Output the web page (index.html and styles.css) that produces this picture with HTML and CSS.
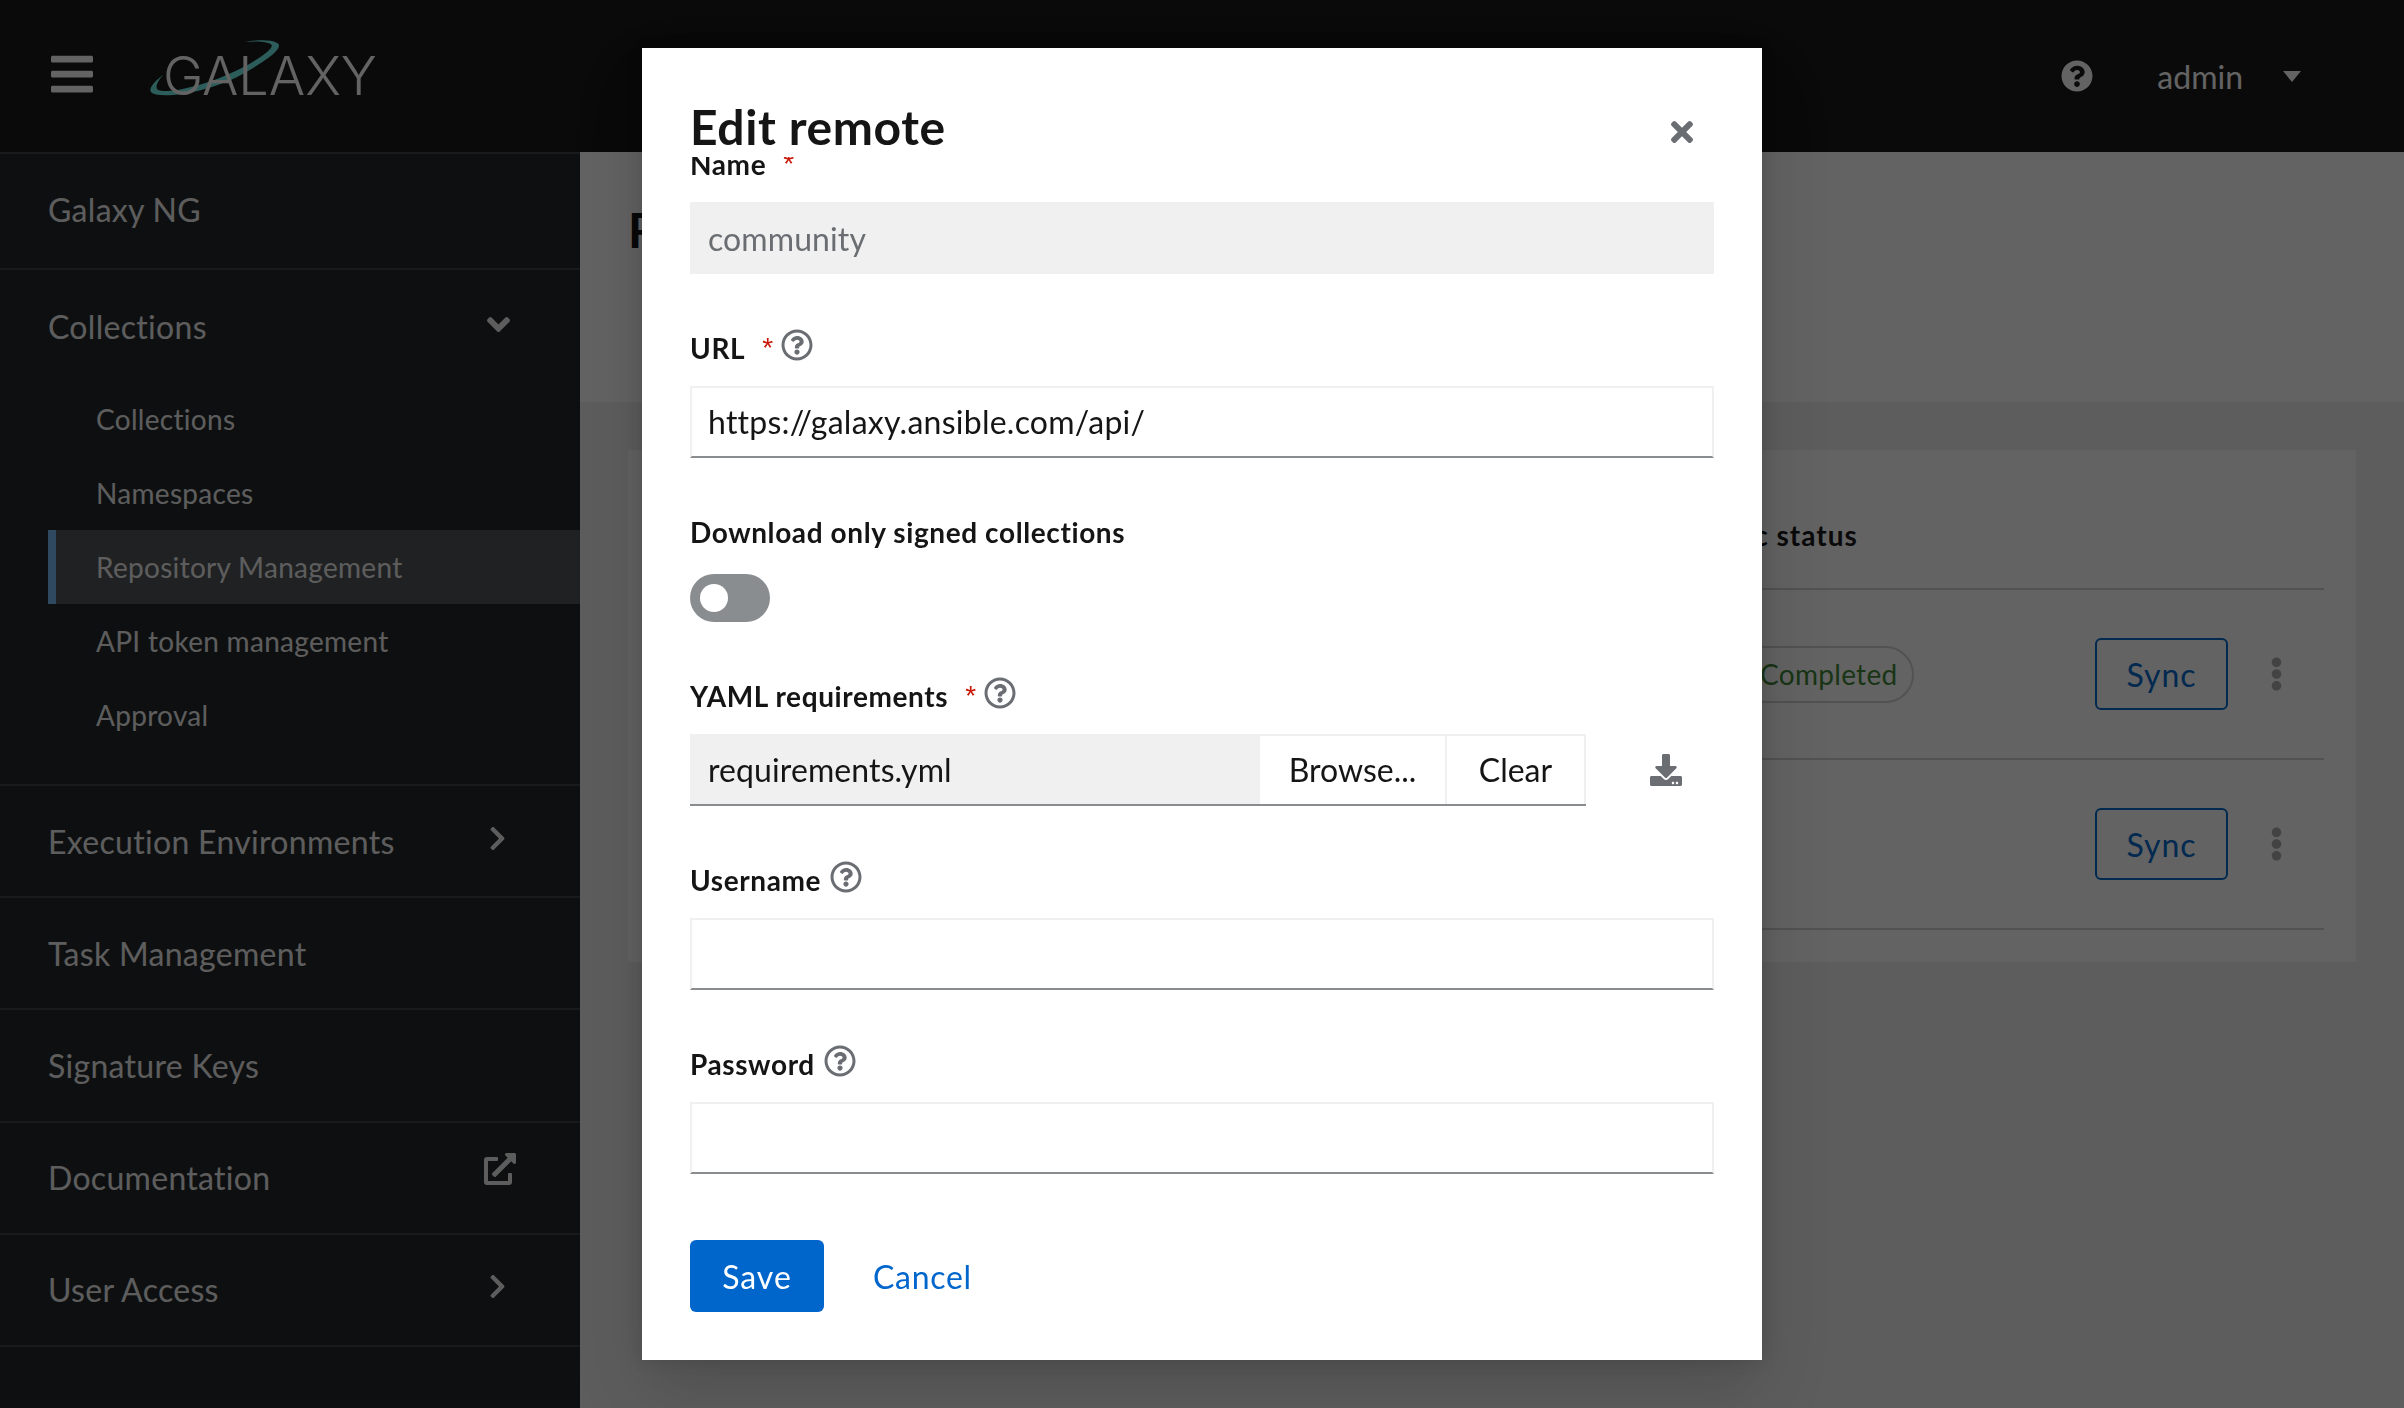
FILE: index.html
```html
<!DOCTYPE html>
<html lang="en">
<head>
<meta charset="UTF-8">
<title>Galaxy - Repo Management</title>
<link rel="stylesheet" href="styles.css">
</head>
<body>
<svg class="defs" width="0" height="0">
  <symbol id="i-bars" viewBox="0 0 448 512"><path d="M16 132h416c8.837 0 16-7.163 16-16V76c0-8.837-7.163-16-16-16H16C7.163 60 0 67.163 0 76v40c0 8.837 7.163 16 16 16zm0 160h416c8.837 0 16-7.163 16-16v-40c0-8.837-7.163-16-16-16H16c-8.837 0-16 7.163-16 16v40c0 8.837 7.163 16 16 16zm0 160h416c8.837 0 16-7.163 16-16v-40c0-8.837-7.163-16-16-16H16c-8.837 0-16 7.163-16 16v40c0 8.837 7.163 16 16 16z"/></symbol>
  <symbol id="i-help-solid" viewBox="0 0 512 512"><path d="M504 256c0 136.997-111.043 248-248 248S8 392.997 8 256C8 119.083 119.043 8 256 8s248 111.083 248 248zM262.655 90c-54.497 0-89.255 22.957-116.549 63.758-3.536 5.286-2.353 12.415 2.715 16.258l34.699 26.31c5.205 3.947 12.621 3.008 16.665-2.122 17.864-22.658 30.113-35.797 57.303-35.797 20.429 0 45.698 13.148 45.698 32.958 0 14.976-12.363 22.667-32.534 33.976C247.128 238.528 216 254.941 216 296v4c0 6.627 5.373 12 12 12h56c6.627 0 12-5.373 12-12v-1.333c0-28.462 83.186-29.647 83.186-106.667 0-58.002-60.165-102-116.531-102zM256 338c-25.365 0-46 20.635-46 46 0 25.364 20.635 46 46 46s46-20.636 46-46c0-25.365-20.635-46-46-46z"/></symbol>
  <symbol id="i-help" viewBox="0 0 512 512"><path d="M256 8C119.043 8 8 119.083 8 256c0 136.997 111.043 248 248 248s248-111.003 248-248C504 119.083 392.957 8 256 8zm0 448c-110.532 0-200-89.431-200-200 0-110.495 89.472-200 200-200 110.491 0 200 89.471 200 200 0 110.53-89.431 200-200 200zm107.244-255.2c0 67.052-72.421 68.084-72.421 92.863V300c0 6.627-5.373 12-12 12h-45.647c-6.627 0-12-5.373-12-12v-8.659c0-35.745 27.1-50.034 47.579-61.516 17.561-9.845 28.324-16.541 28.324-29.579 0-17.246-21.999-28.693-39.784-28.693-23.189 0-33.894 10.977-48.942 29.969-4.057 5.12-11.46 6.071-16.666 2.124l-27.824-21.098c-5.107-3.872-6.251-11.066-2.644-16.363C184.846 131.491 214.94 112 261.794 112c49.071 0 101.45 38.304 101.45 88.8zM298 368c0 23.159-18.841 42-42 42s-42-18.841-42-42 18.841-42 42-42 42 18.841 42 42z"/></symbol>
  <symbol id="i-down" viewBox="0 0 320 512"><path d="M143 352.3L7 216.3c-9.4-9.4-9.4-24.6 0-33.9l22.6-22.6c9.4-9.4 24.6-9.4 33.9 0l96.4 96.4 96.4-96.4c9.4-9.4 24.6-9.4 33.9 0l22.6 22.6c9.4 9.4 9.4 24.6 0 33.9l-136 136c-9.2 9.4-24.4 9.4-33.8 0z"/></symbol>
  <symbol id="i-right" viewBox="0 0 320 512"><path d="M285.476 272.971L91.132 467.314c-9.373 9.373-24.569 9.373-33.941 0l-22.667-22.667c-9.357-9.357-9.375-24.522-.04-33.901L188.505 256 34.484 101.255c-9.335-9.379-9.317-24.544.04-33.901l22.667-22.667c9.373-9.373 24.569-9.373 33.941 0L285.475 239.03c9.373 9.372 9.373 24.568.001 33.941z"/></symbol>
  <symbol id="i-ext" viewBox="0 0 512 512"><path d="M432 320h-32a16 16 0 0 0-16 16v112H64V128h144a16 16 0 0 0 16-16V80a16 16 0 0 0-16-16H48a48 48 0 0 0-48 48v352a48 48 0 0 0 48 48h352a48 48 0 0 0 48-48V336a16 16 0 0 0-16-16zM488 0H360c-21.37 0-32.05 25.91-17 41l35.73 35.73L135 320.37a24 24 0 0 0 0 34L157.67 377a24 24 0 0 0 34 0l243.61-243.68L471 169c15 15 41 4.5 41-17V24a24 24 0 0 0-24-24z"/></symbol>
  <symbol id="i-kebab" viewBox="0 0 192 512"><path d="M96 184c39.8 0 72 32.2 72 72s-32.2 72-72 72-72-32.2-72-72 32.2-72 72-72zM24 80c0 39.8 32.2 72 72 72s72-32.2 72-72S135.8 8 96 8 24 40.2 24 80zm0 352c0 39.8 32.2 72 72 72s72-32.2 72-72-32.2-72-72-72-72 32.2-72 72z"/></symbol>
  <symbol id="i-close" viewBox="0 0 352 512"><path d="M242.72 256l100.07-100.07c12.28-12.28 12.28-32.19 0-44.48l-22.24-22.24c-12.28-12.28-32.19-12.28-44.48 0L176 189.28 75.93 89.21c-12.28-12.28-32.19-12.28-44.48 0L9.21 111.45c-12.28 12.28-12.28 32.19 0 44.48L109.28 256 9.21 356.07c-12.28 12.28-12.28 32.19 0 44.48l22.24 22.24c12.28 12.28 32.2 12.28 44.48 0L176 322.72l100.07 100.07c12.28 12.28 32.2 12.28 44.48 0l22.24-22.24c12.28-12.28 12.28-32.19 0-44.48L242.72 256z"/></symbol>
</svg>

<div class="page">
  <header class="topbar">
    <svg class="burger"><use href="#i-bars"/></svg>
    <div class="logo">
      <svg class="logo-ring" viewBox="0 0 780 300"><path d="M100 165C70 185 52 210 66 219C100 238 250 215 350 155C420 115 465 80 440 68C420 58 380 60 345 66C380 62 420 65 425 75C432 90 360 135 290 165C210 200 110 222 85 210C72 202 85 180 100 165Z"/></svg>
      <span class="logo-text">GALAXY</span>
    </div>
    <div class="topbar-right">
      <svg class="top-help"><use href="#i-help-solid"/></svg>
      <span class="user">admin</span>
      <span class="caret"></span>
    </div>
  </header>

  <div class="below">
    <nav class="sidebar">
      <div class="nav-top">Galaxy NG</div>
      <div class="nav-group">
        <div class="nav-group-title">Collections <svg class="chev-down"><use href="#i-down"/></svg></div>
        <a class="nav-sub">Collections</a>
        <a class="nav-sub">Namespaces</a>
        <a class="nav-sub active">Repository Management</a>
        <a class="nav-sub">API token management</a>
        <a class="nav-sub">Approval</a>
      </div>
      <div class="nav-row">Execution Environments <svg class="chev-right"><use href="#i-right"/></svg></div>
      <div class="nav-row">Task Management</div>
      <div class="nav-row">Signature Keys</div>
      <div class="nav-row">Documentation <svg class="ext"><use href="#i-ext"/></svg></div>
      <div class="nav-row">User Access <svg class="chev-right"><use href="#i-right"/></svg></div>
    </nav>

    <main class="main">
      <section class="page-head"><h1>Repo Management</h1></section>
      <section class="content">
        <div class="card">
          <div class="tr th">
            <div>Remote name</div>
            <div>Sync status</div>
          </div>
          <div class="tr">
            <div>community</div>
            <div><span class="label">Completed</span></div>
            <button class="sync">Sync</button>
            <svg class="kebab"><use href="#i-kebab"/></svg>
          </div>
          <div class="tr">
            <div>rh-certified</div>
            <div></div>
            <button class="sync">Sync</button>
            <svg class="kebab"><use href="#i-kebab"/></svg>
          </div>
        </div>
      </section>
    </main>
  </div>
</div>

<div class="backdrop">
  <div class="modal">
    <svg class="close"><use href="#i-close"/></svg>
    <h2 class="modal-title">Edit remote</h2>
    <div class="modal-body">
      <div class="group first">
        <div class="lbl">Name <span class="req">*</span></div>
        <div class="inp disabled">community</div>
      </div>
      <div class="group">
        <div class="lbl">URL <span class="req">*</span><svg class="help"><use href="#i-help"/></svg></div>
        <div class="inp url">https://galaxy.ansible.com/api/</div>
      </div>
      <div class="group">
        <div class="lbl tall">Download only signed collections</div>
        <div class="switch"><span class="knob"></span></div>
      </div>
      <div class="group">
        <div class="lbl">YAML requirements <span class="req">*</span><svg class="help"><use href="#i-help"/></svg></div>
        <div class="file-row">
          <div class="file">
            <div class="file-name">requirements.yml</div>
            <div class="file-btn browse">Browse...</div>
            <div class="file-btn clear">Clear</div>
          </div>
          <svg class="dl" viewBox="0 0 512 512"><path d="M216 0h80c13.3 0 24 10.7 24 24v168h87.7c17.8 0 26.7 21.5 14.1 34.1L269.7 378.3c-7.5 7.5-19.8 7.5-27.3 0L90.1 226.1c-12.6-12.6-3.7-34.1 14.1-34.1H192V24c0-13.3 10.7-24 24-24zm296 376v112c0 13.3-10.7 24-24 24H24c-13.3 0-24-10.7-24-24V376c0-13.3 10.7-24 24-24h146.7l49 49c20.1 20.1 52.5 20.1 72.6 0l49-49H488c13.3 0 24 10.7 24 24zm-124 88c0-11-9-20-20-20s-20 9-20 20 9 20 20 20 20-9 20-20zm64 0c0-11-9-20-20-20s-20 9-20 20 9 20 20 20 20-9 20-20z"/></svg>
        </div>
      </div>
      <div class="group">
        <div class="lbl">Username<svg class="help"><use href="#i-help"/></svg></div>
        <div class="inp"></div>
      </div>
      <div class="group">
        <div class="lbl">Password<svg class="help"><use href="#i-help"/></svg></div>
        <div class="inp"></div>
      </div>
      <div class="actions">
        <button class="save">Save</button>
        <a class="cancel">Cancel</a>
      </div>
    </div>
  </div>
</div>
</body>
</html>
```
FILE: styles.css
```css
html, body {margin:0; height:100%; overflow:hidden;}
body {font-family:"Lato","Liberation Sans",sans-serif; font-size:32px; color:#151515; background:#f0f0f0;}
.defs {position:absolute;}
svg {fill:currentColor; display:block;}

.page {height:1408px; display:flex; flex-direction:column;}

/* top bar */
.topbar {height:152px; background:#151515; color:#fff; display:flex; align-items:center; flex:none;}
.burger {width:42px; height:48px; margin:0 0 4px 51px;}
.logo {position:relative; margin-left:70px; width:220px; height:60px;}
.logo-ring {position:absolute; left:-33px; top:-26px; width:260px; height:100px; fill:#70f0e8;}
.logo-text {position:relative; font-family:"Inter","Liberation Sans",sans-serif; font-weight:300; font-size:54px; line-height:60px; display:block; color:#fff;}
.topbar-right {margin-left:auto; display:flex; align-items:center; margin-right:103px;}
.top-help {width:32px; height:32px; margin-bottom:1px;}
.user {margin-left:64px; font-size:32px;}
.caret {width:0; height:0; margin-left:40px; border:9px solid transparent; border-top:11px solid #fff; border-bottom:0;}

/* sidebar */
.below {flex:1; display:flex; min-height:0;}
.sidebar {width:580px; flex:none; background:#212427; color:#f0f0f0; border-top:2px solid #3c3f42; box-sizing:border-box; letter-spacing:.3px;}
.nav-top, .nav-row, .nav-group {border-bottom:2px solid #3c3f42; box-sizing:border-box;}
.nav-top {height:116px; display:flex; align-items:center; padding:0 0 3px 48px;}
.nav-row {height:112.2px; display:flex; align-items:center; justify-content:space-between; padding:0 74px 0 48px;}
.nav-group {height:516px;}
.nav-group-title {height:112px; display:flex; align-items:center; justify-content:space-between; padding:0 70px 0 48px;}
.nav-sub {display:block; height:74px; line-height:74px; font-size:28px; padding-left:96px;}
.nav-sub.active {background:#4f5255; margin-left:48px; padding-left:40px; border-left:8px solid #73bcf7;}
.chev-down {width:23px; height:37px; margin-bottom:3px;}
.chev-right {width:17px; height:27px; margin:0 0 6px 0;}
.ext {width:32px; height:32px; margin:0 -10px 18px 0;}

/* main area */
.main {flex:1; min-width:0; display:flex; flex-direction:column;}
.page-head {height:250px; background:#fff; padding:48px; box-sizing:border-box;}
.page-head h1 {margin:0; font-size:48px; font-weight:700; line-height:60px;}
.content {flex:1; padding:48px 48px 0;}
.card {background:#fff; padding:0 32px 32px; height:512px; box-sizing:border-box;}
.tr {display:grid; grid-template-columns:1fr 389px 133px 96px; align-items:center; height:170px; box-sizing:border-box; border-bottom:2px solid #d2d2d2; font-size:28px;}
.tr.th {height:140px; font-weight:700; padding-top:32px; letter-spacing:1px;}
.label {display:inline-block; height:57px; line-height:53px; box-sizing:border-box; width:208px; padding-left:52px; border-radius:30px; border:2px solid #d2d2d2; color:#3e8635; font-size:28px; letter-spacing:.3px;}
.sync {height:72px; width:133px; background:none; border:2px solid #06c; border-radius:6px; color:#06c; font:32px "Lato",sans-serif; letter-spacing:1px;}
.kebab {width:13px; height:34px; justify-self:center; color:#aaa;}

/* overlay, on top of the whole page */
.backdrop {position:fixed; inset:0; background:rgba(3,3,3,.62); display:flex; align-items:center; justify-content:center;}
.modal {position:relative; width:1120px; height:1312px; box-sizing:border-box; background:#fff; padding:49px 48px 48px; box-shadow:0 32px 64px rgba(3,3,3,.16), 0 0 16px rgba(3,3,3,.1); display:flex; flex-direction:column;}
.modal-title {margin:0; font-size:48px; font-weight:700; line-height:60px; flex:none; letter-spacing:.6px;}
.close {position:absolute; right:69px; top:68px; width:22px; height:32px; color:#6a6e73;}
.modal-body {flex:1; overflow:hidden; min-height:0;}

.group {margin-bottom:48px;}
.group.first {margin-top:-19px;}
.lbl {display:flex; align-items:center; height:52px; margin-bottom:12px; font-size:28px; font-weight:700; letter-spacing:.6px;}
.lbl.tall {margin-bottom:16px;}
.req {color:#c9190b; margin:0 -2px 0 17px; font-family:"Liberation Sans",sans-serif; font-weight:400; line-height:32px;}
.help {width:32px; height:32px; margin:-6px 0 0 9px; color:#6a6e73;}
.inp {height:72px; box-sizing:border-box; border:2px solid #f0f0f0; border-bottom-color:#8a8d90; padding:0 16px; line-height:68px; letter-spacing:.1px;}
.inp.url {letter-spacing:.25px;}
.inp.disabled {background:#f0f0f0; color:#6a6e73; border:0; line-height:74px; padding:0 18px;}
.switch {width:80px; height:48px; border-radius:24px; background:#8a8d90; position:relative;}
.knob {position:absolute; left:10px; top:10px; width:28px; height:28px; border-radius:50%; background:#fff;}

.file-row {display:flex; align-items:center;}
.file {width:896px; height:72px; display:flex; box-sizing:border-box; border-top:2px solid #f0f0f0; border-bottom:2px solid #8a8d90;}
.file-name {width:570px; background:#f0f0f0; padding-left:18px; box-sizing:border-box; margin-top:-2px; line-height:72px; letter-spacing:.1px;}
.file-btn {box-sizing:border-box; text-align:center; line-height:68px; border-right:2px solid #f0f0f0;}
.browse {width:187px;}
.clear {width:139px;}
.dl {width:32px; height:32px; margin-left:64px; color:#6a6e73;}

.actions {display:flex; align-items:center; margin-top:66px;}
.save {width:134px; height:72px; background:#06c; color:#fff; border:0; border-radius:6px; font:32px "Lato",sans-serif; letter-spacing:1px;}
.cancel {margin-left:49px; color:#06c; letter-spacing:.7px;}
```
